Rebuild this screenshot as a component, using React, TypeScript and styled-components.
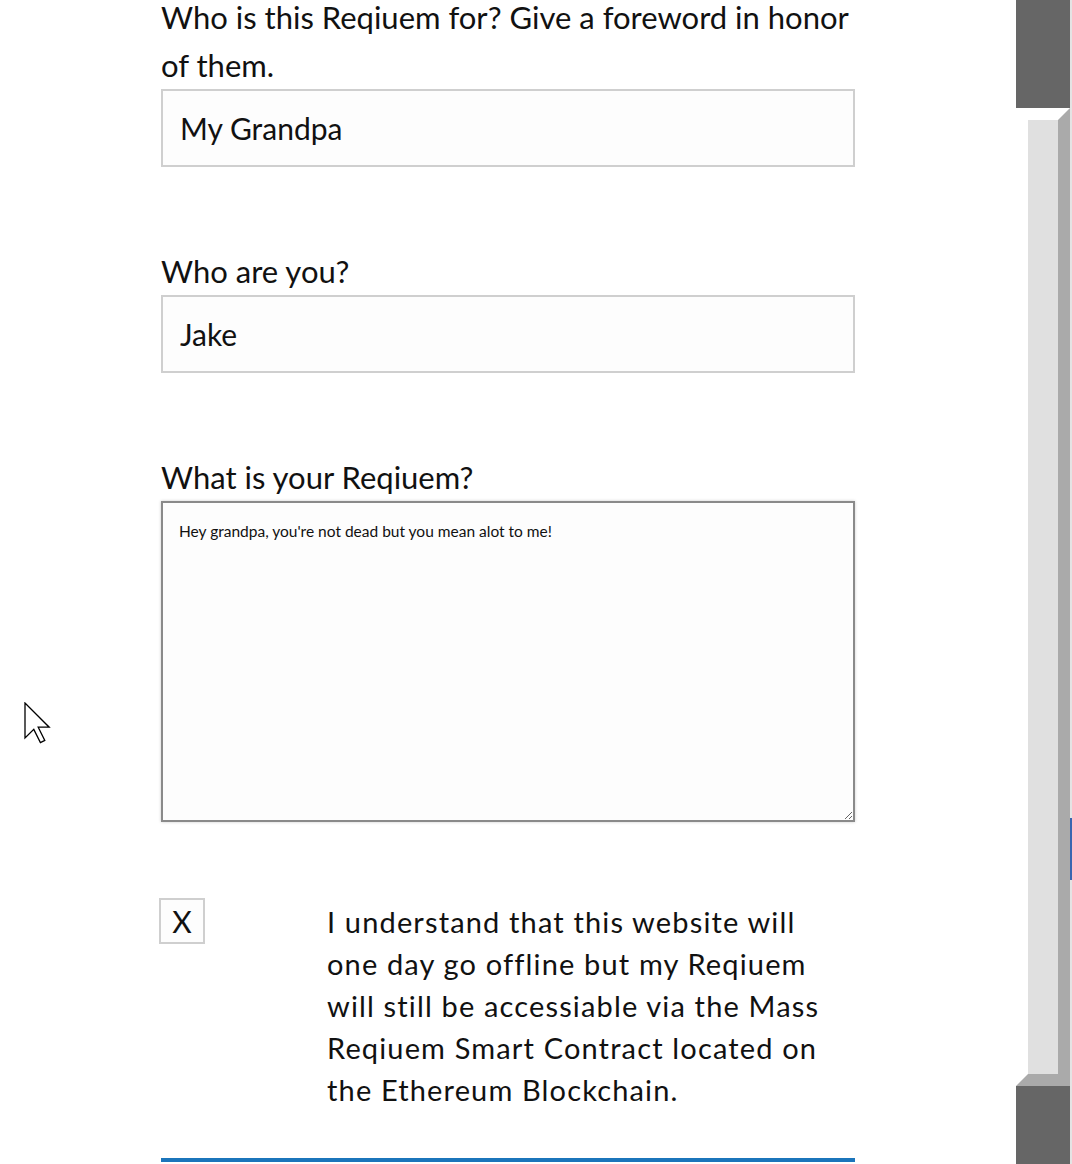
import React from "react";
import styled, { createGlobalStyle } from "styled-components";

const Global = createGlobalStyle`
  html, body { margin: 0; padding: 0; background: #ffffff; overflow: hidden; }
  body { font-family: Lato, "Open Sans", sans-serif; color: #111; }
`;

const Page = styled.div`
  display: flex;
  width: 1072px;
  height: 1164px;
  overflow: hidden;
  position: relative;
`;

const Main = styled.main`
  flex: 1;
  display: flex;
  justify-content: center;
`;

const Form = styled.form`
  width: 694px;
  display: flex;
  flex-direction: column;
  margin-top: -7px;
`;

const Field = styled.div<{ $gap?: number }>`
  display: flex;
  flex-direction: column;
  margin-bottom: ${(p) => p.$gap ?? 80}px;
`;

const Label = styled.label`
  font-size: 31px;
  line-height: 48px;
  color: #111;
`;

const TextInput = styled.input`
  box-sizing: border-box;
  width: 694px;
  height: 78px;
  border: 2px solid #cfcfcf;
  background: #fdfdfd;
  padding: 0 17px;
  font-family: inherit;
  font-size: 30px;
  color: #111;
  outline: none;
`;

const TextArea = styled.textarea`
  box-sizing: border-box;
  width: 694px;
  height: 321px;
  border: 2px solid #8a8a8a;
  box-shadow: 0 0 3px rgba(0, 0, 0, 0.2);
  background: #fdfdfd;
  padding: 19px 16px;
  font-family: inherit;
  font-size: 15.5px;
  color: #111;
  outline: none;
`;

const Agree = styled.div`
  display: grid;
  grid-template-columns: 168px 506px;
  margin-left: -2px;
  margin-top: -2px;
`;

const CheckBox = styled.div`
  box-sizing: border-box;
  width: 46px;
  height: 46px;
  border: 2px solid #cfcfcf;
  background: #fdfdfd;
  display: flex;
  align-items: center;
  justify-content: center;
  font-size: 30px;
  color: #111;
`;

const AgreeText = styled.p`
  margin: 3px 0 0 0;
  font-size: 29px;
  line-height: 42px;
  letter-spacing: 1.15px;
  color: #111;
`;

const Rule = styled.div`
  height: 4px;
  background: #1b75bb;
  margin-top: 47px;
`;

const Side = styled.aside`
  width: 56px;
  flex: none;
  height: 1164px;
`;

const Cursor = styled.svg`
  position: absolute;
  left: 24px;
  top: 702px;
`;

export default function App() {
  return (
    <>
      <Global />
      <Page>
        <Main>
          <Form onSubmit={(e) => e.preventDefault()}>
            <Label htmlFor="for">Who is this Reqiuem for? Give a foreword in honor of them.</Label>
            <Field>
              <TextInput id="for" defaultValue="My Grandpa" />
            </Field>
            <Label htmlFor="you">Who are you?</Label>
            <Field>
              <TextInput id="you" defaultValue="Jake" />
            </Field>
            <Label htmlFor="req">What is your Reqiuem?</Label>
            <Field $gap={78}>
              <TextArea id="req" defaultValue="Hey grandpa, you're not dead but you mean alot to me!" />
            </Field>
            <Agree>
              <CheckBox>X</CheckBox>
              <AgreeText>
                I understand that this website will one day go offline but my Reqiuem will still be accessiable via the Mass Reqiuem Smart Contract located on the Ethereum Blockchain.
              </AgreeText>
            </Agree>
            <Rule />
          </Form>
        </Main>
        <Side>
          <svg width="56" height="1164" viewBox="0 0 56 1164">
            <rect x="0" y="0" width="54" height="108" fill="#666666" />
            <polygon points="42,120 54,108 54,1074 42,1074" fill="#aaaaaa" />
            <rect x="12" y="120" width="30" height="954" fill="#e0e0e0" />
            <polygon points="12,1074 54,1074 54,1086 0,1086" fill="#aaaaaa" />
            <rect x="0" y="1086" width="54" height="78" fill="#666666" />
            <rect x="54" y="0" width="2" height="1164" fill="#e4e4e4" />
            <rect x="54" y="818" width="2" height="62" fill="#3a66b0" />
          </svg>
        </Side>
        <Cursor width="28" height="44" viewBox="0 0 28 44">
          <path
            d="M1 1 L1 36 L9.8 27.4 L16.4 40.6 L20.8 38.4 L14.2 25.2 L25.2 25.2 Z"
            fill="#fff"
            stroke="#000"
            strokeWidth="1.3"
            strokeLinejoin="miter"
          />
        </Cursor>
      </Page>
    </>
  );
}
